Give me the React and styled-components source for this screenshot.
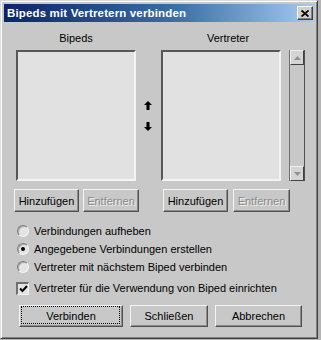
import styled, { createGlobalStyle } from "styled-components";

const GlobalStyle = createGlobalStyle`
  html, body {
    margin: 0;
    padding: 0;
    background: #b4b4b4;
  }
  body {
    font-family: "Liberation Sans", Arial, sans-serif;
    font-size: 11px;
    color: #000;
  }
`;

const Window = styled.div`
  box-sizing: border-box;
  width: 318px;
  height: 339px;
  background: #c8c8c8;
  border-top: 1px solid #dcdcdc;
  border-left: 1px solid #dcdcdc;
  border-right: 1px solid #404040;
  border-bottom: 1px solid #404040;
  box-shadow: inset 1px 1px 0 #ffffff, inset -1px -1px 0 #808080;
  padding: 3px;
  display: flex;
  flex-direction: column;
`;

const TitleBar = styled.div`
  height: 18px;
  display: flex;
  align-items: center;
  justify-content: space-between;
  padding: 0 1px 0 3px;
  background: linear-gradient(90deg, #0a246a 0%, #3a6ea5 55%, #a6caf0 100%);
`;

const Title = styled.span`
  color: #fff;
  font-weight: bold;
  font-size: 11.5px;
  letter-spacing: 0.15px;
`;

const CloseButton = styled.div`
  box-sizing: border-box;
  width: 16px;
  height: 14px;
  background: #d4d0c8;
  border-top: 1px solid #fff;
  border-left: 1px solid #fff;
  border-right: 1px solid #404040;
  border-bottom: 1px solid #404040;
  box-shadow: inset -1px -1px 0 #808080;
  display: flex;
  align-items: center;
  justify-content: center;
`;

const Body = styled.div`
  flex: 1;
  display: flex;
  flex-direction: column;
  padding: 10px 0 0 10px;
`;

const ListsRow = styled.div`
  display: flex;
`;

const ListGroup = styled.div`
  width: ${(p) => p.width}px;
  display: flex;
  flex-direction: column;
`;

const ListLabel = styled.div`
  width: ${(p) => p.labelWidth}px;
  margin-left: ${(p) => p.offset}px;
  height: 13px;
  line-height: 13px;
  text-align: center;
  margin-bottom: 5px;
`;

const ListArea = styled.div`
  display: flex;
  gap: 8px;
  margin-left: ${(p) => p.offset}px;
`;

const ListBox = styled.div`
  box-sizing: border-box;
  width: 120px;
  height: 131px;
  background: #e1e1e1;
  border-top: 2px solid #585858;
  border-left: 2px solid #585858;
  border-right: 2px solid #f4f4f4;
  border-bottom: 2px solid #f4f4f4;
`;

const ScrollBar = styled.div`
  box-sizing: border-box;
  width: 16px;
  height: 131px;
  background: #c8c8c8;
  border-left: 1px solid #707070;
  border-right: 1px solid #505050;
  display: flex;
  flex-direction: column;
  justify-content: space-between;
`;

const ScrollArrow = styled.div`
  box-sizing: border-box;
  height: 15px;
  background: #d4d4d4;
  border-top: 1px solid #f0f0f0;
  border-left: 1px solid #f0f0f0;
  border-right: 1px solid #404040;
  border-bottom: 1px solid #404040;
  display: flex;
  align-items: center;
  justify-content: center;
`;

const ArrowColumn = styled.div`
  width: 20px;
  display: flex;
  flex-direction: column;
  align-items: center;
  padding-top: 69px;
  gap: 12px;
  box-sizing: border-box;
  padding-right: 5px;
`;

const ButtonRow = styled.div`
  display: flex;
  gap: ${(p) => p.gap}px;
  margin-top: 8px;
  margin-left: ${(p) => p.offset || 0}px;
`;

const Button = styled.div`
  box-sizing: border-box;
  width: ${(p) => p.width}px;
  height: ${(p) => p.height || 23}px;
  background: #c8c8c8;
  border-top: 1px solid #f4f4f4;
  border-left: 1px solid #f4f4f4;
  border-right: 1px solid #505050;
  border-bottom: 1px solid #505050;
  box-shadow: inset -1px -1px 0 #8c8c8c;
  display: flex;
  align-items: center;
  justify-content: center;
  position: relative;
  color: ${(p) => (p.disabled ? "#8a8a8a" : "#000")};
  text-shadow: ${(p) => (p.disabled ? "1px 1px 0 #f0f0f0" : "none")};

  ${(p) =>
    p.focused &&
    `
    &::after {
      content: "";
      position: absolute;
      left: 1px;
      top: 0px;
      right: 2px;
      bottom: 2px;
      border: 1px dotted #000;
    }
  `}
`;

const Options = styled.div`
  display: flex;
  flex-direction: column;
  margin-top: 10px;
`;

const OptionRow = styled.div`
  height: 18px;
  display: flex;
  align-items: center;
  gap: 5px;
  padding-left: ${(p) => p.indent}px;
  margin-top: ${(p) => p.top || 0}px;
`;

const Radio = styled.span`
  box-sizing: border-box;
  width: 12px;
  height: 12px;
  border-radius: 50%;
  background: #e4e4e4;
  border: 1px solid;
  border-color: #7c7c7c #f4f4f4 #f4f4f4 #7c7c7c;
  box-shadow: inset 1px 1px 0 #a8a8a8;
  display: flex;
  align-items: center;
  justify-content: center;

  &::after {
    content: "";
    width: 4px;
    height: 4px;
    border-radius: 50%;
    background: ${(p) => (p.checked ? "#000" : "transparent")};
  }
`;

const CheckBox = styled.span`
  box-sizing: border-box;
  width: 13px;
  height: 13px;
  background: #e4e4e4;
  border-top: 2px solid #707070;
  border-left: 2px solid #707070;
  border-right: 1px solid #f4f4f4;
  border-bottom: 1px solid #f4f4f4;
  display: flex;
  align-items: center;
  justify-content: center;
`;

const ActionRow = styled.div`
  display: flex;
  margin-top: 8px;
  padding-left: 5px;
  gap: ${(p) => p.gap}px;
`;

const UpArrow = () => (
  <svg width="8" height="9" viewBox="0 0 8 9">
    <path d="M4 0 L8 4 L5.5 4 L5.5 9 L2.5 9 L2.5 4 L0 4 Z" fill="#000" />
  </svg>
);

const DownArrow = () => (
  <svg width="8" height="9" viewBox="0 0 8 9">
    <path d="M4 9 L8 5 L5.5 5 L5.5 0 L2.5 0 L2.5 5 L0 5 Z" fill="#000" />
  </svg>
);

const SmallTriangle = ({ down }) => (
  <svg width="7" height="4" viewBox="0 0 7 4">
    <path d={down ? "M0 0 L7 0 L3.5 4 Z" : "M0 4 L7 4 L3.5 0 Z"} fill="#909090" />
  </svg>
);

const App = () => (
  <>
    <GlobalStyle />
    <Window>
      <TitleBar>
        <Title>Bipeds mit Vertretern verbinden</Title>
        <CloseButton>
          <svg width="8" height="7" viewBox="0 0 8 7">
            <path d="M0.5 0.5 L7.5 6.5 M7.5 0.5 L0.5 6.5" stroke="#000" strokeWidth="1.8" />
          </svg>
        </CloseButton>
      </TitleBar>
      <Body>
        <ListsRow>
          <ListGroup width={126}>
            <ListLabel labelWidth={120} offset={2}>Bipeds</ListLabel>
            <ListArea offset={2}>
              <ListBox />
            </ListArea>
            <ButtonRow gap={4}>
              <Button width={65}>Hinzufügen</Button>
              <Button width={56} disabled>Entfernen</Button>
            </ButtonRow>
          </ListGroup>
          <ArrowColumn>
            <UpArrow />
            <DownArrow />
          </ArrowColumn>
          <ListGroup width={145}>
            <ListLabel labelWidth={134} offset={1}>Vertreter</ListLabel>
            <ListArea offset={1}>
              <ListBox />
              <ScrollBar>
                <ScrollArrow>
                  <SmallTriangle />
                </ScrollArrow>
                <ScrollArrow>
                  <SmallTriangle down />
                </ScrollArrow>
              </ScrollBar>
            </ListArea>
            <ButtonRow gap={5} offset={3}>
              <Button width={65}>Hinzufügen</Button>
              <Button width={57} disabled>Entfernen</Button>
            </ButtonRow>
          </ListGroup>
        </ListsRow>
        <Options>
          <OptionRow indent={3}>
            <Radio />
            <span>Verbindungen aufheben</span>
          </OptionRow>
          <OptionRow indent={3}>
            <Radio checked />
            <span>Angegebene Verbindungen erstellen</span>
          </OptionRow>
          <OptionRow indent={3}>
            <Radio />
            <span>Vertreter mit nächstem Biped verbinden</span>
          </OptionRow>
          <OptionRow indent={2} top={3}>
            <CheckBox>
              <svg width="9" height="8" viewBox="0 0 9 8">
                <path d="M1 3.5 L3.5 6 L8 1" stroke="#000" strokeWidth="2" fill="none" />
              </svg>
            </CheckBox>
            <span>Vertreter für die Verwendung von Biped einrichten</span>
          </OptionRow>
        </Options>
        <ActionRow gap={7}>
          <Button width={104} height={22} focused>Verbinden</Button>
          <Button width={78} height={22}>Schließen</Button>
          <Button width={87} height={22}>Abbrechen</Button>
        </ActionRow>
      </Body>
    </Window>
  </>
);

export default App;
